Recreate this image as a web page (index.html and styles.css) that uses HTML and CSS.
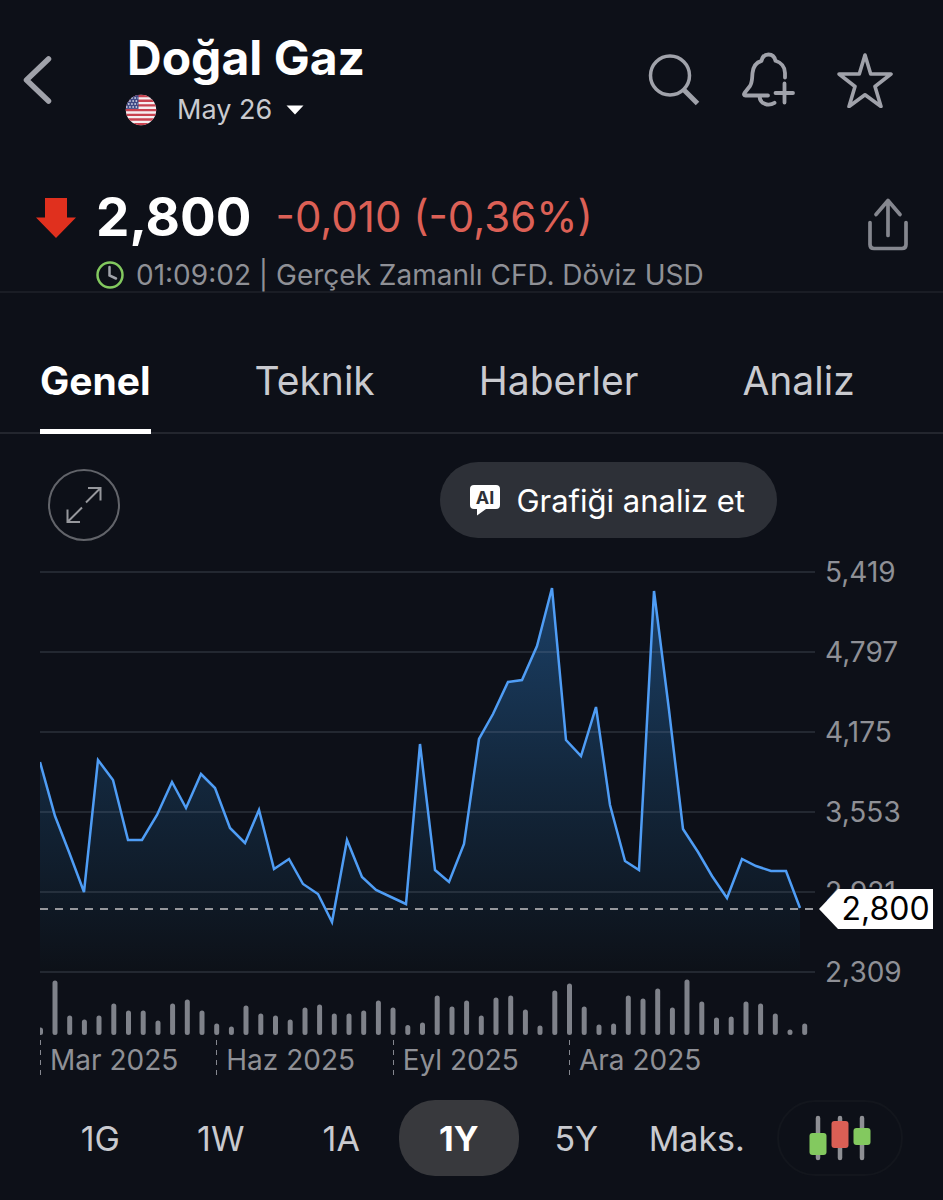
FILE: index.html
```html
<!DOCTYPE html>
<html lang="tr">
<head>
  <meta charset="UTF-8">
  <title>Doğal Gaz</title>
  <meta name="viewport" content="width=device-width, initial-scale=1">
  <link rel="stylesheet" href="styles.css">
</head>
<body>
  <header class="header">
    <button class="icon-btn back-btn" aria-label="Geri">
      <svg width="30" height="50" viewBox="0 0 30 50"><path d="M26.500 4 4.500 25 26.500 46" stroke-width="5.500"/></svg>
    </button>
    <div class="heading">
      <h1 class="title">Doğal Gaz</h1>
      <button class="contract">
        <svg class="flag" width="32" height="32" viewBox="0 0 32 32">
          <defs><clipPath id="flagClip"><circle cx="16" cy="16" r="15.200"/></clipPath></defs>
          <g clip-path="url(#flagClip)">
            <rect width="32" height="32" fill="#f6eef0"/>
            <path d="M0 2H32M0 6.700H32M0 11.400H32M0 16.100H32M0 20.800H32M0 25.500H32M0 30.200H32" stroke="#c8424f" stroke-width="2.350"/>
            <rect width="13.500" height="14.900" fill="#3f4a85"/>
            <path d="M3 4H13M1 7H13M3 10H13M1 13H13" stroke="#e4e6f2" stroke-width="1.500" stroke-dasharray="1.500 1.700"/>
          </g>
        </svg>
        <span>May 26</span>
        <svg class="caret" width="18" height="10" viewBox="0 0 18 10"><path d="M0.500 0.500H17.500L9 9.500Z"/></svg>
      </button>
    </div>
    <div class="actions">
      <button class="icon-btn" aria-label="Ara">
        <svg width="56" height="56" viewBox="0 0 56 56"><circle cx="25" cy="23.500" r="19.500" stroke-width="3.500"/><path d="M38.500 37.500 52.500 51.500" stroke-width="5" stroke-linecap="butt"/></svg>
      </button>
      <button class="icon-btn" aria-label="Alarm ekle">
        <svg width="56" height="56" viewBox="2 1 56 56"><path d="M46 26.500V22C46 16 42 11.500 36.500 9.800C35.500 5 32.500 3.500 29.500 3.500S23.500 5 22.500 9.800C16.500 11.500 14 16.500 13.500 22C13 27 13.500 31 11 35L5.500 42C4.500 43.500 5 44.500 6.500 44.500H29M20.500 45.500C21 53 29.500 55.500 35.500 51.800M36.500 42H54M45.500 32.500V51.500" stroke-width="3.800"/></svg>
      </button>
      <button class="icon-btn" aria-label="Favorilere ekle">
        <svg width="56" height="56" viewBox="0 0 56 56"><path d="M28 3 22.300 22H2L18 34.500 12 54.500 28 42.800 44 54.500 38 34.500 54 22H33.700Z" stroke-width="3.600"/></svg>
      </button>
    </div>
  </header>

  <section class="quote">
    <svg class="down" width="40" height="42" viewBox="0 0 40 42"><path d="M9 1H31V20.500H40L20 41 0 20.500H9Z"/></svg>
    <div class="quote-body">
      <div class="price-row">
        <span class="price">2,800</span>
        <span class="change">-0,010 (-0,36%)</span>
      </div>
      <div class="meta">
        <svg class="clock" width="28" height="28" viewBox="0 0 28 28"><circle cx="14" cy="14" r="12.500"/><path d="M13.500 6V14.500L20 17.500"/></svg>
        <span>01:09:02 | Gerçek Zamanlı CFD. Döviz USD</span>
      </div>
    </div>
    <button class="icon-btn share" aria-label="Paylaş">
      <svg width="44" height="54" viewBox="0 0 44 54"><path d="M4 25.500V47.500C4 50 5.500 51.500 8 51.500H36C38.500 51.500 40 50 40 47.500V25.500M22 38.500V3.500M10 17.500 22 3.500 34 17.500" stroke-width="3.700"/></svg>
    </button>
  </section>

  <nav class="tabs">
    <a class="tab active" href="#genel">Genel</a>
    <a class="tab" href="#teknik">Teknik</a>
    <a class="tab" href="#haberler">Haberler</a>
    <a class="tab" href="#analiz">Analiz</a>
  </nav>

  <main>
    <div class="toolbar">
      <button class="expand" aria-label="Tam ekran">
        <svg width="40" height="40" viewBox="0 0 40 40"><path d="M22 17.500 36.500 3M24 3H36.500V15.500M18 22.500 3.500 37M3.500 24.500V37H16"/></svg>
      </button>
      <button class="analyze">
        <svg width="32" height="32" viewBox="0 0 32 32">
          <path d="M5 1H27Q31 1 31 5V21Q31 25 27 25H17L8 31.500V25H5Q1 25 1 21V5Q1 1 5 1Z"/>
          <text x="16" y="20" text-anchor="middle">AI</text>
        </svg>
        <span>Grafiği analiz et</span>
      </button>
    </div>

    <section class="chart">
      <div class="plot">
        <svg class="plot-svg" viewBox="0 0 775 488" preserveAspectRatio="none">
          <defs>
            <linearGradient id="areaFill" x1="0" y1="36" x2="0" y2="420" gradientUnits="userSpaceOnUse">
              <stop offset="0" stop-color="#1b4067"/>
              <stop offset="0.500" stop-color="#13273c"/>
              <stop offset="1" stop-color="#0d1118"/>
            </linearGradient>
          </defs>
          <path class="area" d="M0 210 15 264 29 300 44 340 58 208 73 228 88 288 102 288 117 263 132 230 146 256 161 222 175 236 190 276 205 291 219 258 234 317 249 307 263 332 278 342 292 370 307 288 322 325 336 338 351 345 366 352 380 192 395 318 409 330 424 292 439 187 453 162 468 130 482 128 497 94 512 36 526 188 541 204 556 155 570 253 585 309 599 318 614 39 629 158 643 277 658 300 672 324 687 346 702 307 716 314 731 319 746 319 760 356V420H0Z"/>
          <path class="grid" d="M0 20H775M0 100H775M0 180H775M0 260H775M0 340H775M0 420H775"/>
          <path class="last" d="M0 357H775"/>
          <polyline class="line" points="0,210 15,264 29,300 44,340 58,208 73,228 88,288 102,288 117,263 132,230 146,256 161,222 175,236 190,276 205,291 219,258 234,317 249,307 263,332 278,342 292,370 307,288 322,325 336,338 351,345 366,352 380,192 395,318 409,330 424,292 439,187 453,162 468,130 482,128 497,94 512,36 526,188 541,204 556,155 570,253 585,309 599,318 614,39 629,158 643,277 658,300 672,324 687,346 702,307 716,314 731,319 746,319 760,356"/>
          <path class="volume" d="M0.500 478V480.500M15 431V480.500M29.700 466V480.500M44.400 470V480.500M59 466V480.500M73.800 454V480.500M88.500 461V480.500M103.200 461V480.500M118 471V480.500M132.600 454V480.500M147.300 450V480.500M162 461V480.500M176.700 474V480.500M191.400 477V480.500M206 456V480.500M220.800 464V480.500M235.500 466V480.500M250.200 470V480.500M265 458V480.500M279.600 455V480.500M294.300 464V480.500M309 464V480.500M323.700 461V480.500M338.400 451V480.500M353 458V480.500M367.800 475.500V480.500M382.500 473V480.500M397.200 446V480.500M412 457V480.500M426.600 451V480.500M441.300 466V480.500M456 448V480.500M470.700 446V480.500M485.400 460V480.500M500 476V480.500M514.800 441V480.500M529.500 434V480.500M544.200 457V480.500M559 475V480.500M573.600 474V480.500M588.300 446V480.500M603 449V480.500M617.700 439V480.500M632.400 458V480.500M647 430V480.500M661.800 452V480.500M676.500 468V480.500M691.200 467V480.500M706 452V480.500M720.600 454V480.500M735.300 464V480.500M750 480V480.500M764.700 474V480.500"/>
        </svg>
        <div class="months">
          <span>Mar 2025</span>
          <span>Haz 2025</span>
          <span>Eyl 2025</span>
          <span>Ara 2025</span>
        </div>
      </div>
      <div class="axis">
        <span>5,419</span>
        <span>4,797</span>
        <span>4,175</span>
        <span>3,553</span>
        <span>2,921</span>
        <span>2,309</span>
        <div class="price-tag">2,800</div>
      </div>
    </section>

    <div class="ranges">
      <div class="range-list">
        <button class="range">1G</button>
        <button class="range">1W</button>
        <button class="range">1A</button>
        <button class="range active">1Y</button>
        <button class="range">5Y</button>
        <button class="range">Maks.</button>
      </div>
      <button class="chart-type" aria-label="Grafik türü">
        <svg width="62" height="46" viewBox="0 0 62 46">
          <path d="M9 3V43M31 3V43M53 3V43" stroke="#8e8f94" stroke-width="4.500" stroke-linecap="round"/>
          <rect x="0.500" y="18" width="17" height="22" rx="3" fill="#83c95f"/>
          <rect x="22.500" y="6" width="17" height="27" rx="3" fill="#da5f55"/>
          <rect x="44.500" y="13" width="17" height="17" rx="3" fill="#83c95f"/>
        </svg>
      </button>
    </div>
  </main>
</body>
</html>
```
FILE: styles.css
```css
* { box-sizing: border-box; }

body {
  margin: 0;
  min-height: 100vh;
  background: #0d1018;
  color: #c9cacf;
  font-family: Inter, "Liberation Sans", sans-serif;
}

button {
  margin: 0;
  padding: 0;
  border: none;
  background: none;
  color: inherit;
  font: inherit;
  cursor: pointer;
}

svg { display: block; flex: none; }

.icon-btn svg {
  fill: none;
  stroke: #a0a2aa;
  stroke-linecap: round;
  stroke-linejoin: round;
}

/* header */
.header {
  display: flex;
  align-items: center;
  padding: 28px 50px 0 22px;
}

.heading {
  flex: 1;
  margin-left: 73px;
}

.title {
  margin: 0;
  padding-left: 2px;
  color: #fff;
  font-size: 48px;
  font-weight: 700;
  line-height: 60px;
}

.contract {
  display: flex;
  align-items: center;
  font-size: 27px;
  line-height: 44px;
}

.contract span { margin: 0 14px 0 20px; }
.caret { fill: #fff; }

.actions {
  display: flex;
  gap: 40px;
}

/* quote */
.quote {
  display: flex;
  padding: 53px 33px 0 36px;
  border-bottom: 2px solid #1a1d25;
}

.down {
  margin-top: 12px;
  fill: #e0301e;
}

.quote-body {
  flex: 1;
  margin-left: 20px;
}

.price-row {
  display: flex;
  align-items: center;
  gap: 24px;
  line-height: 64px;
}

.price {
  color: #fff;
  font-size: 53px;
  font-weight: 700;
}

.change {
  color: #dc6056;
  font-size: 42px;
}

.meta {
  display: flex;
  align-items: center;
  gap: 12px;
  padding-top: 10px;
  color: #8f9096;
  font-size: 28px;
  line-height: 32px;
}

.clock { fill: none; stroke-width: 2.5; }
.clock circle { stroke: #83c95f; }
.clock path { stroke: #a0a2aa; stroke-linecap: round; }

.share {
  align-self: flex-start;
  margin-top: 12px;
}

.icon-btn.share svg { stroke: #85878f; }

/* tabs */
.tabs {
  display: flex;
  gap: 104px;
  padding: 62px 40px 0;
  border-bottom: 2px solid #23262e;
}

.tab {
  margin-bottom: -2px;
  padding-bottom: 22px;
  border-bottom: 5px solid transparent;
  color: #c9cacf;
  font-size: 39px;
  line-height: 52px;
  text-decoration: none;
}

.tab.active {
  border-color: #fff;
  color: #fff;
  font-weight: 700;
}

/* chart */
.toolbar {
  display: flex;
  align-items: flex-start;
  justify-content: space-between;
  padding: 28px 166px 4px 40px;
}

.expand {
  display: flex;
  align-items: center;
  justify-content: center;
  width: 72px;
  height: 72px;
  margin: 7px 8px;
  border: 2px solid #62646a;
  border-radius: 50%;
}

.expand svg {
  fill: none;
  stroke: #96979c;
  stroke-width: 2;
}

.analyze {
  display: flex;
  align-items: center;
  gap: 15px;
  height: 76px;
  padding: 0 32px 0 29px;
  border-radius: 38px;
  background: #2d3037;
  color: #fff;
  font-size: 31px;
}

.analyze path { fill: #fff; }

.analyze text {
  fill: #2d3037;
  font-size: 18px;
  font-weight: 700;
}

.chart {
  display: flex;
  padding-left: 40px;
  color: #8f9096;
  font-size: 28px;
  line-height: 40px;
}

.plot { flex: 1; }

.plot-svg {
  width: 100%;
  height: 488px;
}

.plot-svg path,
.plot-svg polyline {
  fill: none;
}

.plot-svg .area { fill: url(#areaFill); }
.plot-svg .grid { stroke: #8a98a8; stroke-opacity: 0.18; stroke-width: 2; }
.plot-svg .last { stroke: #96979c; stroke-width: 2; stroke-dasharray: 8 7; }
.plot-svg .line { stroke: #4f9df5; stroke-width: 2.5; }
.plot-svg .volume { stroke: #7f828a; stroke-width: 5; stroke-linecap: round; }

.months { display: flex; }

.months span {
  width: 22.75%;
  padding-left: 10px;
  background: repeating-linear-gradient(#85878f 0 5px, transparent 5px 10px) 0 0 / 1px 36px no-repeat;
}

.axis {
  position: relative;
  display: flex;
  flex-direction: column;
  justify-content: space-between;
  width: 128px;
  height: 440px;
  padding-left: 10px;
}

.price-tag {
  position: absolute;
  top: 337px;
  right: 10px;
  left: 23px;
  background: #fff;
  color: #000;
  font-size: 32px;
  text-align: center;
}

.price-tag::before {
  content: "";
  position: absolute;
  top: 0;
  right: 100%;
  border: solid transparent;
  border-width: 20px 19px 20px 0;
  border-right-color: #fff;
}

/* ranges */
.ranges {
  display: flex;
  align-items: center;
  gap: 20px;
  padding: 20px 40px 24px;
}

.range-list {
  display: flex;
  flex: 1;
}

.range {
  flex: 1;
  height: 76px;
  font-size: 34px;
}

.range.active {
  margin: 0 -3px;
  border-radius: 36px;
  background: #38393d;
  color: #fff;
  font-weight: 700;
}

.chart-type {
  display: flex;
  flex: none;
  align-items: center;
  justify-content: center;
  width: 126px;
  height: 76px;
  border: 2px solid #13161d;
  border-radius: 38px;
}
```
